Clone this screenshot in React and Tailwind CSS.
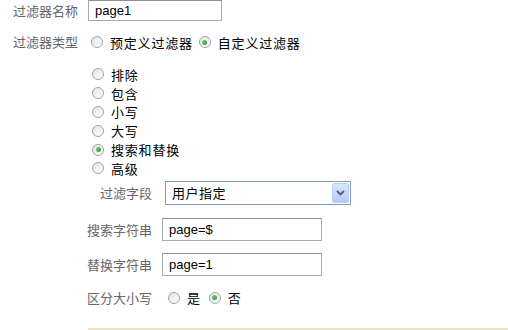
import React from 'react';

const cjk = { fontFamily: '"Noto Sans CJK SC", "Liberation Sans", sans-serif' };
const latin = { fontFamily: '"Liberation Sans", "Noto Sans CJK SC", sans-serif' };

const Radio = ({ checked }) => (
  <span className="relative inline-flex w-[12px] h-[12px] shrink-0 rounded-full border border-[#9aa3ad] bg-gradient-to-br from-[#e4e4e4] to-[#ffffff] items-center justify-center">
    {checked && (
      <span className="w-[5px] h-[5px] rounded-full bg-gradient-to-br from-[#7ed07e] to-[#2e932e]" />
    )}
  </span>
);

const Option = ({ label, checked, className = '' }) => (
  <label className={`flex items-center text-[13px] text-black leading-none ${className}`} style={cjk}>
    <Radio checked={checked} />
    <span className="ml-[7px] tracking-[0.8px]">{label}</span>
  </label>
);

const TextBox = ({ value, className = '' }) => (
  <div
    className={`flex items-center border border-[#a5acb2] border-t-[#8c9196] bg-white pl-[6px] text-[13px] text-black ${className}`}
    style={latin}
  >
    {value}
  </div>
);

const filterKinds = [
  { label: '排除', checked: false },
  { label: '包含', checked: false },
  { label: '小写', checked: false },
  { label: '大写', checked: false },
  { label: '搜索和替换', checked: true },
  { label: '高级', checked: false },
];

export default function App() {
  return (
    <div className="w-[508px] h-[330px] bg-white overflow-hidden text-[13px]" style={cjk}>
      {/* 名称 */}
      <div className="flex items-center h-[21px]">
        <span className="w-[88px] pl-[13px] text-[#666666]">过滤器名称</span>
        <TextBox value="page1" className="w-[134px] h-[21px]" />
      </div>

      {/* 类型 */}
      <div className="flex items-center h-[20px] mt-[11px]">
        <span className="w-[91px] pl-[13px] text-[#666666]">过滤器类型</span>
        <Option label="预定义过滤器" />
        <Option label="自定义过滤器" checked className="ml-[6px]" />
      </div>

      {/* 子类型 */}
      <div className="flex flex-col mt-[13px] pl-[92px]">
        {filterKinds.map((k) => (
          <div key={k.label} className="flex items-center h-[18.8px]">
            <Option label={k.label} checked={k.checked} />
          </div>
        ))}
      </div>

      {/* 过滤字段 */}
      <div className="flex items-center h-[24px] mt-[3px] pl-[87px]">
        <span className="w-[78px] pr-[13px] text-right text-[#666666]">过滤字段</span>
        <div className="flex items-center justify-between w-[186px] h-[24px] border border-[#7f9db9] bg-white">
          <span className="pl-[6px] text-black tracking-[0.5px]">用户指定</span>
          <span className="flex items-center justify-center w-[17px] h-[20px] mr-[1px] rounded-[2px] border border-[#bccbf3] bg-gradient-to-b from-[#dce6fe] to-[#b5c8f6]">
            <svg width="9" height="6" viewBox="0 0 9 6">
              <path d="M1 1 L4.5 4.5 L8 1" fill="none" stroke="#4d6185" strokeWidth="1.8" />
            </svg>
          </span>
        </div>
      </div>

      {/* 搜索字符串 */}
      <div className="flex items-center h-[23px] mt-[13px] pl-[87px]">
        <span className="w-[75px] text-[#666666]">搜索字符串</span>
        <TextBox value="page=$" className="w-[160px] h-[23px]" />
      </div>

      {/* 替换字符串 */}
      <div className="flex items-center h-[23px] mt-[12px] pl-[87px]">
        <span className="w-[75px] text-[#666666]">替换字符串</span>
        <TextBox value="page=1" className="w-[160px] h-[23px]" />
      </div>

      {/* 区分大小写 */}
      <div className="flex items-center h-[20px] mt-[12px] pl-[87px]">
        <span className="w-[81px] text-[#666666]">区分大小写</span>
        <Option label="是" />
        <Option label="否" checked className="ml-[8px]" />
      </div>

      <div className="ml-[88px] mt-[20px] h-[2px] bg-[#e9e2c4]" />
    </div>
  );
}
